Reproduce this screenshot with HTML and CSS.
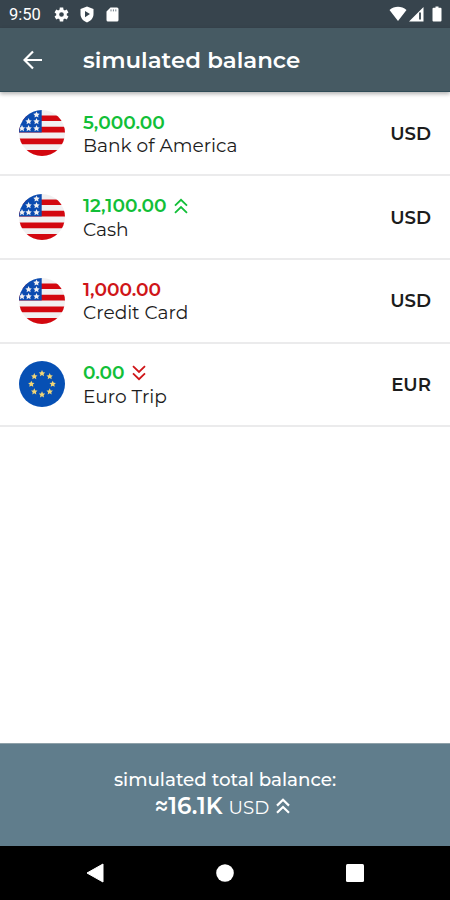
FILE: index.html
```html
<!DOCTYPE html>
<html lang="en">
<head>
    <meta charset="UTF-8">
    <meta name="viewport" content="width=device-width, initial-scale=1.0">
    <title>simulated balance</title>
    <link rel="stylesheet" href="styles.css">
</head>
<body>
    <!-- shared shapes -->
    <svg class="defs" width="0" height="0">
        <defs>
            <clipPath id="round"><circle cx="23" cy="23" r="23"/></clipPath>
            <path id="star" d="M0-3.3 L1-1.2 3.2-1 1.6.6 2 2.800 0 1.700-2 2.800-1.6.6-3.200-1-1-1.200Z"/>
            <symbol id="us" viewBox="0 0 46 46">
                <g clip-path="url(#round)">
                    <rect width="46" height="46" fill="#f1f0f1"/>
                    <path fill="#d3070f" d="M0 5.500h46v5.600H0zM0 16.800h46v5.600H0zM0 28.600h46v5.600H0zM0 40h46v6H0z"/>
                    <rect width="22.700" height="22.400" fill="#0b4bb0"/>
                    <g class="us-stars">
                        <use href="#star" x="17.500" y="4.800"/>
                        <use href="#star" x="9.600" y="11.400"/>
                        <use href="#star" x="17.500" y="11.400"/>
                        <use href="#star" x="9.600" y="18.400"/>
                        <use href="#star" x="17.500" y="18.400"/>
                        <use href="#star" x="3" y="18.400"/>
                    </g>
                </g>
            </symbol>
            <symbol id="eu" viewBox="0 0 46 46">
                <circle cx="23" cy="23" r="23" fill="#0750b4"/>
                <g class="eu-stars">
                    <use href="#star" x="23" y="12.400"/>
                    <use href="#star" x="30.700" y="15.400"/>
                    <use href="#star" x="33.700" y="23"/>
                    <use href="#star" x="30.700" y="30.600"/>
                    <use href="#star" x="23" y="33.600"/>
                    <use href="#star" x="15.300" y="30.600"/>
                    <use href="#star" x="12.300" y="23"/>
                    <use href="#star" x="15.300" y="15.400"/>
                </g>
            </symbol>
            <symbol id="up" viewBox="0 0 14 16">
                <path d="M1 7.600 7 1.800l6 5.800M1 14.800 7 9l6 5.800" fill="none" stroke="currentColor"/>
            </symbol>
            <symbol id="down" viewBox="0 0 14 16">
                <path d="M1 1.200 7 7l6-5.800M1 8.400l6 5.800 6-5.800" fill="none" stroke="currentColor"/>
            </symbol>
        </defs>
    </svg>

    <div class="screen">
        <div class="status-bar">
            <span class="time">9:50</span>
            <svg class="gear" width="17" height="17" viewBox="0 0 24 24"><path fill="#fff" fill-rule="evenodd" d="M19.400 13a7.500 7.500 0 0 0 0-2l2.400-1.800-2.400-4.200-2.800 1.200a7 7 0 0 0-1.800-1L14.400 2H9.600l-.4 3.200a7 7 0 0 0-1.800 1L4.600 5 2.200 9.200 4.600 11a7.500 7.500 0 0 0 0 2l-2.400 1.800L4.600 19l2.800-1.200a7 7 0 0 0 1.800 1l.4 3.200h4.800l.4-3.200a7 7 0 0 0 1.800-1l2.800 1.200 2.400-4.200zM12 8.700a3.300 3.300 0 1 1 0 6.600 3.300 3.300 0 0 1 0-6.600z"/></svg>
            <svg class="shield" width="14" height="17" viewBox="0 0 14 17"><path fill="#fff" fill-rule="evenodd" d="M7 .5 13.500 3v5c0 4-2.600 7-6.500 8.500C3.100 15 .5 12 .5 8V3zM5 5v6.200l5-3.100z"/></svg>
            <svg class="sd" width="13" height="15" viewBox="0 0 13 15"><path fill="#fff" d="M4.500.5H11a1.500 1.500 0 0 1 1.500 1.500v11a1.500 1.500 0 0 1-1.500 1.500H2A1.500 1.500 0 0 1 .5 13V4.500z"/><path d="M5 2.400v2M7.400 2.400v2M9.800 2.400v2" stroke="#74808a"/></svg>
            <svg class="signals" width="53" height="17" viewBox="0 0 53 17"><path fill="#fff" d="M.5 4C5.500-.3 12.500-.3 17.500 4L9 15zM20 15.500 34.500 1v14.500z"/><path d="M31 6.500v7" stroke="#37444d" stroke-width="1.800"/><path fill="#fff" d="M44.500 1.800h2V.5h3v1.300h2q1 0 1 1v11.700q0 1-1 1h-7q-1 0-1-1V2.800q0-1 1-1z"/></svg>
        </div>

        <div class="app-bar">
            <svg width="20" height="20" viewBox="0 0 20 20"><path d="M19 10H2M10 1.500 1.500 10l8.500 8.500" fill="none" stroke="#fff" stroke-width="2.200"/></svg>
            <h1>simulated balance</h1>
        </div>

        <div class="accounts">
            <div class="account">
                <svg class="flag"><use href="#us"/></svg>
                <div class="info">
                    <div class="amount green">5,000.00</div>
                    <p>Bank of America</p>
                </div>
                <span class="currency">USD</span>
            </div>
            <div class="account">
                <svg class="flag"><use href="#us"/></svg>
                <div class="info trend">
                    <div class="amount green">12,100.00<svg class="arrows"><use href="#up"/></svg></div>
                    <p>Cash</p>
                </div>
                <span class="currency">USD</span>
            </div>
            <div class="account">
                <svg class="flag"><use href="#us"/></svg>
                <div class="info">
                    <div class="amount red">1,000.00</div>
                    <p>Credit Card</p>
                </div>
                <span class="currency">USD</span>
            </div>
            <div class="account">
                <svg class="flag"><use href="#eu"/></svg>
                <div class="info trend">
                    <div class="amount green">0.00<svg class="arrows red"><use href="#down"/></svg></div>
                    <p>Euro Trip</p>
                </div>
                <span class="currency">EUR</span>
            </div>
        </div>

        <div class="total">
            <p class="label">simulated total balance:</p>
            <div class="sum"><b>≈16.1K</b><span>USD</span><svg class="arrows"><use href="#up"/></svg></div>
        </div>

        <div class="nav-bar">
            <svg width="18" height="20" viewBox="0 0 18 20"><path d="M17 1v18L1 10z" fill="#fff" stroke="#fff" stroke-linejoin="round"/></svg>
            <svg width="18" height="18" viewBox="0 0 18 18"><circle cx="9" cy="9" r="8.800" fill="#fff"/></svg>
            <svg width="18" height="18" viewBox="0 0 18 18"><rect width="18" height="18" rx="1.500" fill="#fff"/></svg>
        </div>
    </div>
</body>
</html>
```
FILE: styles.css
```css
* {
    box-sizing: border-box;
}
body {
    margin: 0;
    font-family: Montserrat, Inter, sans-serif;
    color: #1c1c1c;
}
h1, p {
    margin: 0;
}
svg {
    display: block;
    flex: none;
}
.defs {
    position: absolute;
}
.us-stars {
    fill: #f1f0f1;
}
.eu-stars {
    fill: #f2d675;
}
.screen {
    width: 450px;
    height: 900px;
    display: flex;
    flex-direction: column;
    background: #fff;
    overflow: hidden;
}
.status-bar {
    height: 28px;
    flex: none;
    display: flex;
    align-items: center;
    padding: 1px 8px 0 9px;
    background: #37444d;
    color: #fff;
}
.time {
    width: 44px;
    font: 16.5px Roboto, sans-serif;
}
.shield {
    margin-left: 10px;
}
.sd {
    margin-left: 12px;
}
.signals {
    margin-left: auto;
}
.app-bar {
    height: 64px;
    flex: none;
    display: flex;
    align-items: center;
    padding-left: 23px;
    background: #465a63;
    border-bottom: 1px solid #304c57;
    box-shadow: 0 2px 4px rgba(0, 0, 0, .3);
    color: #fff;
    z-index: 1;
}
.app-bar h1 {
    margin-left: 40px;
    padding-top: 1px;
    font-size: 22.9px;
    font-weight: 600;
    white-space: nowrap;
}
.accounts {
    flex: 1;
    padding-top: .5px;
}
.account {
    height: 83.7px;
    display: flex;
    align-items: center;
    padding: 0 19px;
    border-bottom: 2px solid #ebebec;
}
.flag {
    width: 46px;
    height: 46px;
}
.info {
    margin-left: 18px;
    padding-top: 1px;
    flex: 1;
    white-space: nowrap;
}
.amount {
    display: flex;
    align-items: center;
    height: 23px;
    font-size: 18.6px;
    font-weight: 600;
}
.info p {
    font-size: 18.6px;
    line-height: 23px;
}
.trend {
    padding-top: 0;
}
.trend .amount {
    height: 25px;
}
.arrows {
    width: 14px;
    height: 16px;
    margin-left: 8px;
    stroke-width: 1.8px;
}
.trend .arrows {
    margin-left: 7px;
}
.green {
    color: #12bf38;
}
.red {
    color: #cf1518;
}
.currency {
    font-size: 18.2px;
    font-weight: 600;
}
.total {
    height: 103px;
    flex: none;
    display: flex;
    flex-direction: column;
    align-items: center;
    padding-top: 24px;
    background: #607d8c;
    border-top: 1px solid #8fa1a9;
    color: #fff;
}
.label {
    font-size: 18.3px;
    font-weight: 500;
    line-height: 24px;
}
.sum {
    display: flex;
    align-items: center;
    height: 28px;
    padding-right: 5px;
}
.sum b {
    font-size: 23px;
    font-weight: 600;
}
.sum span {
    margin-left: 6px;
    padding-top: 2px;
    font-size: 18.2px;
}
.sum .arrows {
    margin-left: 7px;
    stroke-width: 2.2px;
}
.nav-bar {
    height: 54px;
    flex: none;
    display: flex;
    align-items: center;
    justify-content: space-between;
    padding: 0 86px;
    background: #000;
}
```
